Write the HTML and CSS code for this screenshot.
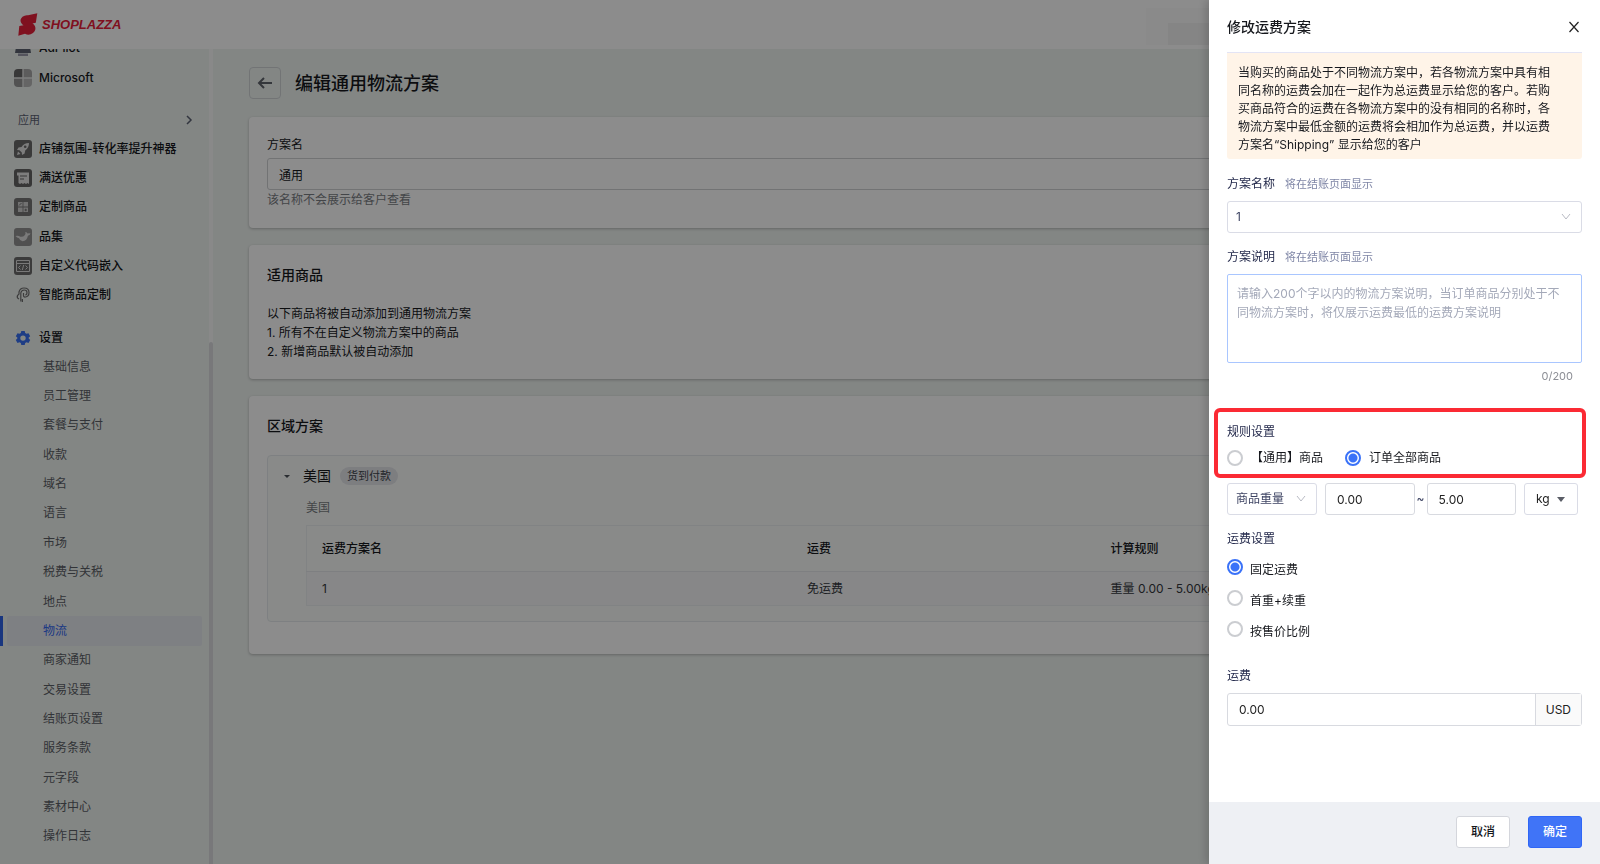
FILE: index.html
```
<!DOCTYPE html>
<html lang="zh-CN">
<head>
<meta charset="utf-8">
<title>编辑通用物流方案</title>
<link rel="stylesheet" href="styles.css">
</head>
<body>
<div class="app">
  <header class="topbar">
    <a class="brand" href="#">
      <svg class="brand-mark" viewBox="0 0 20 24" aria-hidden="true"><path d="M19.300.3 10 2.300Q7 1.800 4.500 3.800 1.500 6.500 3 9.600 4 11.500 5.500 12.300L1.300 13 .3 22.700 7 20.800Q11 23 15 20 18.500 17 17 13.200 16 11.500 14.500 10.600L17.800 9.800Z"/></svg>
      <span class="brand-name">SHOPLAZZA</span>
    </a>
    <div class="account" aria-hidden="true"><span class="account-name"></span></div>
  </header>

  <div class="body">
    <nav class="sidebar" aria-label="主导航">
      <ul class="menu menu-channels">
        <li><a href="#"><svg class="icon" viewBox="0 0 18 18"><path fill="#5b6270" d="M3 2h12l2 12H1z"/><path fill="#99a" d="M4 14.500h10V17H4z"/></svg>AdPilot</a></li>
        <li><a href="#"><svg class="icon" viewBox="0 0 18 18"><path fill="#666" d="M4 0h4.600v8.600H0V4a4 4 0 0 1 4-4z"/><path fill="#a8a8a8" d="M9.400 0H14a4 4 0 0 1 4 4v4.600H9.400z"/><path fill="#959595" d="M0 9.400h8.600V18H4a4 4 0 0 1-4-4z"/><path fill="#b8b8b8" d="M9.400 9.400H18V14a4 4 0 0 1-4 4H9.400z"/><path stroke="#e0e0e0" d="M9 0v18M0 9h18"/></svg>Microsoft</a></li>
      </ul>
      <a class="menu-title" href="#">应用<svg viewBox="0 0 8 10"><path d="M2 1l4 4-4 4"/></svg></a>
      <ul class="menu menu-apps">
        <li><a href="#"><svg class="icon" viewBox="0 0 18 18"><rect width="18" height="18" rx="3" fill="#6b6b6b"/><path fill="#e4e4e4" d="M15 3q-5 0-7.500 4L4.500 7.500 3 10l2.500.3 2.300 2.300.2 2.400 2.600-1.500.6-3Q15 8 15 3z"/><path fill="#e4e4e4" d="M3 15l1-3.500L6.500 14z"/><circle cx="11.200" cy="6.800" r="1.300" fill="#6b6b6b"/></svg>店铺氛围-转化率提升神器</a></li>
        <li><a href="#"><svg class="icon" viewBox="0 0 18 18"><rect width="18" height="18" rx="3" fill="#656565"/><path fill="#e4e4e4" d="M3 3.500h12V15l-1.500-1-1.500 1-1.500-1L9 15l-1.500-1L6 15l-1.500-1V6.500H3z"/><path stroke="#656565" stroke-width="1.200" d="M6 7h7M6 10h4"/></svg>满送优惠</a></li>
        <li><a href="#"><svg class="icon" viewBox="0 0 18 18"><rect width="18" height="18" rx="3" fill="#777"/><path fill="#cfcfcf" d="M4 4h4.600v4.600H4zM9.400 4H14v4.600H9.400zM4 9.400h4.600V14H4zM9.400 9.400H14V14H9.400z"/><path stroke="#777" fill="none" d="M5 7.500l2.500-2.500M10.500 12h2.500M11.700 10.700v2.500"/></svg>定制商品</a></li>
        <li><a href="#"><svg class="icon" viewBox="0 0 18 18"><rect width="18" height="18" rx="3" fill="#929292"/><path fill="#dedede" d="M1.500 8q2.500-.8 5 .8 2.500.4 4.500-1.800 1-1.500.2-3 2 0 2.300 1.600 1.500-.6 3-.2-.6 2-2.600 2.400Q13 13 8.500 13.200 6 13 5 10.200 3 9.800 1.500 8z"/></svg>品集</a></li>
        <li><a href="#"><svg class="icon" viewBox="0 0 18 18"><rect width="18" height="18" rx="3" fill="#6c6c6c"/><path fill="none" stroke="#dcdcdc" d="M2.500 3.500h13v11h-13zM2.500 6.500h13M6.500 8.500l-2 2 2 2M11.500 8.500l2 2-2 2M9.700 8l-1.400 5"/></svg>自定义代码嵌入</a></li>
        <li><a href="#"><svg class="icon" viewBox="0 0 18 18"><path fill="none" stroke="#707070" stroke-width="1.200" d="M5 13Q2.500 12 3.500 9.500L5 8V6q1-4 5-4 5 0 5 4.500 0 4-3.500 4.500-2 .3-2-1.500V7M6.800 15.500V7q.5-3 3.400-3 2.800 0 2.800 2.600Q13 9 11.300 9M8.400 16V13"/></svg>智能商品定制</a></li>
      </ul>
      <a class="menu-settings" href="#"><svg class="icon" viewBox="0 0 18 18"><path fill="#3870f2" fill-rule="evenodd" d="M7.300 2h3.400l.5 2 1.300.8 2-.6 1.700 3-1.500 1.400v1l1.500 1.300-1.700 3-2-.6-1.300.8-.5 2H7.300l-.5-2-1.300-.8-2 .6-1.700-3 1.500-1.400v-1L1.800 7.200l1.700-3 2 .6L6.800 4zM9 6.400a2.700 2.700 0 1 0 0 5.400 2.700 2.700 0 0 0 0-5.400z"/></svg>设置</a>
      <ul class="submenu">
        <li><a href="#">基础信息</a></li>
        <li><a href="#">员工管理</a></li>
        <li><a href="#">套餐与支付</a></li>
        <li><a href="#">收款</a></li>
        <li><a href="#">域名</a></li>
        <li><a href="#">语言</a></li>
        <li><a href="#">市场</a></li>
        <li><a href="#">税费与关税</a></li>
        <li><a href="#">地点</a></li>
        <li class="active"><a href="#" aria-current="page">物流</a></li>
        <li><a href="#">商家通知</a></li>
        <li><a href="#">交易设置</a></li>
        <li><a href="#">结账页设置</a></li>
        <li><a href="#">服务条款</a></li>
        <li><a href="#">元字段</a></li>
        <li><a href="#">素材中心</a></li>
        <li><a href="#">操作日志</a></li>
      </ul>
    </nav>
    <div class="scrollbar" aria-hidden="true"><div class="scrollbar-thumb"></div></div>

    <main class="main">
      <div class="page-head">
        <button class="back" type="button" aria-label="返回"><svg viewBox="0 0 16 14"><path d="M7 2 2 7l5 5M2 7h13"/></svg></button>
        <h1>编辑通用物流方案</h1>
      </div>

      <section class="card">
        <label class="name-label" for="plan">方案名</label>
        <input class="name-input" id="plan" type="text" value="通用">
        <p class="name-hint">该名称不会展示给客户查看</p>
      </section>

      <section class="card">
        <h2>适用商品</h2>
        <p class="rules">以下商品将被自动添加到通用物流方案<br>1. 所有不在自定义物流方案中的商品<br>2. 新增商品默认被自动添加</p>
      </section>

      <section class="card card-zones">
        <h2>区域方案</h2>
        <div class="zone">
          <div class="zone-head">
            <svg viewBox="0 0 8 5"><path d="M1 1h6L4 4z"/></svg>
            <span class="zone-name">美国</span>
            <span class="badge">货到付款</span>
          </div>
          <div class="zone-body">
            <p class="zone-country">美国</p>
            <table class="rates">
              <thead><tr><th class="col-name">运费方案名</th><th class="col-fee">运费</th><th>计算规则</th></tr></thead>
              <tbody><tr><td>1</td><td>免运费</td><td>重量 0.00 - 5.00kg</td></tr></tbody>
            </table>
          </div>
        </div>
      </section>
    </main>
  </div>
</div>

<div class="mask"></div>

<form class="drawer" role="dialog" aria-labelledby="drawer-title">
  <div class="drawer-content">
    <header class="drawer-head">
      <h2 id="drawer-title">修改运费方案</h2>
      <button class="close" type="button" aria-label="关闭"><svg viewBox="0 0 12 12"><path d="M1.500 1l9 10M10.500 1l-9 10"/></svg></button>
    </header>
    <p class="notice">当购买的商品处于不同物流方案中，若各物流方案中具有相同名称的运费会加在一起作为总运费显示给您的客户。若购买商品符合的运费在各物流方案中的没有相同的名称时，各物流方案中最低金额的运费将会相加作为总运费，并以运费方案名“Shipping” 显示给您的客户</p>

    <div class="field">
      <div class="field-head"><label for="rate-name">方案名称</label><small>将在结账页面显示</small></div>
      <div class="select select-wide">
        <select id="rate-name"><option>1</option></select>
        <svg class="chevron" viewBox="0 0 10 8"><path d="M1 1l4 5 4-5"/></svg>
      </div>
    </div>

    <div class="field">
      <div class="field-head"><label for="rate-desc">方案说明</label><small>将在结账页面显示</small></div>
      <textarea id="rate-desc" maxlength="200" placeholder="请输入200个字以内的物流方案说明，当订单商品分别处于不同物流方案时，将仅展示运费最低的运费方案说明"></textarea>
      <output class="counter" for="rate-desc">0/200</output>
    </div>

    <div class="highlight" role="radiogroup" aria-labelledby="scope-title">
      <h3 id="scope-title">规则设置</h3>
      <div class="scope-options">
        <label><input type="radio" name="scope">【通用】商品</label>
        <label><input type="radio" name="scope" checked>订单全部商品</label>
      </div>
    </div>

    <div class="range">
      <div class="select">
        <select aria-label="条件"><option>商品重量</option></select>
        <svg class="chevron" viewBox="0 0 10 8"><path d="M1 1l4 5 4-5"/></svg>
      </div>
      <div class="range-pair">
        <input type="text" value="0.00" aria-label="最小重量">
        <span>~</span>
        <input type="text" value="5.00" aria-label="最大重量">
      </div>
      <div class="select select-unit">
        <select aria-label="单位"><option>kg</option></select>
        <svg class="caret" viewBox="0 0 8 5"><path d="M0 0h8L4 5z"/></svg>
      </div>
    </div>

    <div class="fee-type" role="radiogroup" aria-labelledby="fee-title">
      <h3 id="fee-title">运费设置</h3>
      <label><input type="radio" name="fee" checked><span>固定运费</span></label>
      <label><input type="radio" name="fee"><span>首重+续重</span></label>
      <label><input type="radio" name="fee"><span>按售价比例</span></label>
    </div>

    <div class="fee">
      <label for="fee">运费</label>
      <div class="money"><input id="fee" type="text" value="0.00"><span>USD</span></div>
    </div>
  </div>
  <footer class="drawer-foot">
    <button class="btn" type="button">取消</button>
    <button class="btn btn-primary" type="submit">确定</button>
  </footer>
</form>
</body>
</html>
```

FILE: styles.css
```
* { box-sizing: border-box; }

body {
  margin: 0;
  font: 12px/20px Inter, "Noto Sans CJK SC", sans-serif;
  color: #16181d;
}

h1, h2, h3, p, ul { margin: 0; padding: 0; }
ul { list-style: none; }
a { color: inherit; text-decoration: none; }
button, input, select, textarea { font: inherit; color: inherit; margin: 0; }
svg { display: block; flex: none; }

/* Shell */
.app {
  height: 100vh;
  min-height: 760px;
  display: flex;
  flex-direction: column;
  overflow: hidden;
  background: #eff4f1;
}

.topbar {
  height: 49px;
  flex: none;
  display: flex;
  align-items: flex-start;
  justify-content: space-between;
  padding-left: 18px;
  background: #fff;
  position: relative;
}

.brand { display: flex; align-items: center; gap: 4px; height: 49px; color: #e8203a; }
.brand-mark { width: 20px; height: 24px; fill: #e8203a; }
.brand-name { font: italic 700 13px/24px "Liberation Sans Narrow", "Liberation Sans", sans-serif; }

.account { width: 454px; height: 37px; margin-top: 8px; padding: 15px 0 0 22px; background: #fbfbfb; }
.account-name { display: block; height: 22px; background: #f3f3f3; }

.body { flex: 1; display: flex; min-height: 0; }

/* Sidebar */
.sidebar {
  width: 209px;
  flex: none;
  display: flex;
  flex-direction: column;
  padding-bottom: 13px;
  overflow: hidden;
}

.sidebar a { display: flex; align-items: center; }
.icon { width: 18px; height: 18px; margin-right: 7px; }

.menu { display: grid; grid-auto-rows: 1fr; flex: none; padding-left: 14px; font-weight: 500; }
.menu a { height: 100%; }
.menu-channels { height: 60px; margin-top: -16px; }
.menu-apps { height: 176px; }

.sidebar .menu-title {
  flex: none;
  height: 28px;
  margin-top: 13px;
  padding: 0 16px 0 18px;
  justify-content: space-between;
  font-size: 11px;
  color: #5c6273;
}
.menu-title svg { width: 8px; height: 10px; fill: none; stroke: #5c6273; stroke-width: 1.5; }

.sidebar .menu-settings { flex: none; height: 29px; margin-top: 13px; padding-left: 14px; font-weight: 500; }

.submenu { flex: 1; display: flex; flex-direction: column; color: #5c5f66; }
.submenu li { flex: 1; display: flex; padding: 0 7px; border-left: 0 solid #2f63e8; }
.submenu a { flex: 1; padding-left: 36px; border-radius: 2px; }
.submenu .active { padding-left: 4px; border-left-width: 3px; color: #3468f0; }
.submenu .active a { background: #e6e9ef; }

.scrollbar { width: 4px; flex: none; background: #fafafa; display: flex; align-items: flex-end; }
.scrollbar-thumb { width: 4px; height: 64%; border-radius: 2px 2px 0 0; background: #dadbde; }

/* Page */
.main { flex: 1; min-width: 0; padding: 18px 36px; }

.page-head { display: flex; align-items: center; gap: 14px; margin-bottom: 18px; }
.page-head h1 { padding-top: 2px; font-size: 18px; line-height: 24px; font-weight: 500; }
.back {
  width: 32px;
  height: 32px;
  display: grid;
  place-items: center;
  padding: 0;
  border: 1px solid #d0d3d6;
  border-radius: 4px;
  background: transparent;
}
.back svg { width: 16px; height: 14px; fill: none; stroke: #60646c; stroke-width: 2; }

.card {
  margin-bottom: 17px;
  padding: 18px;
  border-radius: 4px;
  background: #fff;
  box-shadow: 0 1px 3px rgba(0, 0, 0, .25);
}
.card h2 { font-size: 14px; line-height: 24px; font-weight: 500; }

.name-label { display: block; line-height: 20px; margin-bottom: 3px; }
.name-input { display: block; width: 100%; height: 32px; padding: 0 11px; border: 1px solid #cfd1d4; border-radius: 3px; background: transparent; }
.name-hint { line-height: 20px; color: #7b7e84; }

.rules { margin-top: 17px; line-height: 19px; }

.card-zones { padding-bottom: 32px; }
.zone { margin-top: 17px; padding: 10px 24px 15px 15px; border: 1px solid #e6eaed; border-radius: 4px; background: #f9fcfa; }
.zone-head { display: flex; align-items: center; height: 20px; }
.zone-head svg { width: 8px; height: 5px; margin-right: 12px; fill: #4e525a; }
.zone-name { font-size: 14px; margin-right: 9px; }
.badge { padding: 0 7px; border-radius: 9px; font-size: 11px; line-height: 18px; background: #e4e5ea; color: #40444c; }
.zone-body { padding-left: 23px; }
.zone-country { margin: 12px 0 7px; line-height: 20px; color: #7b7e84; }

.rates { width: 100%; border-collapse: collapse; table-layout: fixed; border: 1px solid #eceef1; }
.rates th, .rates td { padding: 0 15px; text-align: left; }
.rates th { height: 46px; font-weight: 500; }
.rates td { height: 34px; border-top: 1px solid #e6e8eb; background: #f6f6f7; color: #33363c; }
.rates .col-name { width: 40%; }
.rates .col-fee { width: 25%; }

.mask { position: fixed; inset: 0; background: rgba(0, 0, 0, .45); }

/* Drawer */
.drawer {
  position: fixed;
  top: 0;
  right: 0;
  bottom: 0;
  width: 391px;
  display: flex;
  flex-direction: column;
  background: #fff;
  box-shadow: -4px 0 8px rgba(0, 0, 0, .15);
}

.drawer-content { flex: 1; padding: 0 18px; overflow: hidden; }
.drawer-head { display: flex; align-items: center; justify-content: space-between; height: 53px; padding-top: 2px; border-bottom: 1px solid #e3e4f5; }
.drawer-head h2 { font-size: 14px; line-height: 20px; font-weight: 500; }
.close { padding: 2px; border: 0; background: none; }
.close svg { width: 12px; height: 12px; fill: none; stroke: #222; stroke-width: 1.2; }

.notice { padding: 11px 30px 5px 11px; border-radius: 0 0 3px 3px; background: #fff4e8; line-height: 18px; }

.field { margin-top: 14px; }
.notice + .field { margin-top: 15px; }
.field-head { display: flex; align-items: center; gap: 10px; height: 20px; margin-bottom: 7px; color: #242a4c; }
.field-head small { font-size: 11px; color: #7f86a6; }

.select { position: relative; width: 90px; }
.select-wide { width: 100%; }
.select-unit { width: 54px; }
.select select {
  appearance: none;
  display: block;
  width: 100%;
  height: 32px;
  padding: 0 8px;
  border: 1px solid #dadce6;
  border-radius: 3px;
  background: #fff;
  color: #3e4463;
}
.select-unit select { padding: 0 11px; color: #222; }
.chevron, .caret { position: absolute; right: 11px; top: 12px; pointer-events: none; }
.chevron { width: 10px; height: 8px; fill: none; stroke: #b9bbc4; }
.caret { width: 8px; height: 5px; top: 14px; right: 13px; fill: #5a5d66; }

.field textarea {
  display: block;
  width: 100%;
  height: 89px;
  padding: 9px 16px 9px 9px;
  border: 1px solid #a9c6ff;
  border-radius: 2px;
  line-height: 19px;
  resize: none;
}
.field textarea::placeholder { color: #a4a9b9; opacity: 1; }
.counter { display: block; margin-top: 3px; padding-right: 9px; text-align: right; font-size: 11px; line-height: 20px; color: #8c8e95; }

.drawer h3 { font-size: 12px; line-height: 20px; font-weight: 400; color: #242a4c; }

.highlight { margin: 22px -4px 5px -13px; padding: 10px 9px; border: 4px solid #fb2a34; border-radius: 6px; height: 70px; }
.scope-options { display: flex; gap: 22px; margin-top: 6px; }
.scope-options label { display: flex; align-items: center; gap: 8px; height: 20px; }

input[type="radio"] {
  appearance: none;
  width: 16px;
  height: 16px;
  flex: none;
  border: 2px solid #cbcdd1;
  border-radius: 50%;
  background: #fff;
}
input[type="radio"]:checked {
  border-color: #3a72f8;
  background: radial-gradient(circle, #3a72f8 0 4px, #fff 5px);
}

.range { display: flex; gap: 8px; padding-right: 4px; }
.range-pair { flex: 1; display: flex; align-items: center; color: #3e4463; }
.range-pair span { width: 12px; text-align: center; }
.range-pair input { flex: 1; min-width: 0; width: 0; height: 32px; padding: 0 11px; border: 1px solid #d8dae0; border-radius: 3px; color: #222; }

.fee-type { margin-top: 14px; }
.fee-type label { display: flex; gap: 7px; height: 31px; }
.fee-type h3 { margin-bottom: 10px; }
.fee-type label span { padding-top: 1px; }

.fee { margin-top: 14px; color: #242a4c; }
.fee label { display: block; margin-bottom: 7px; }
.money { display: flex; height: 33px; border: 1px solid #d8dae0; border-radius: 3px; color: #222; }
.money input { flex: 1; min-width: 0; padding: 0 11px; border: 0; background: none; }
.money span { padding: 0 10px; border-left: 1px solid #d8dae0; background: #fafafa; line-height: 31px; }

.drawer-foot { display: flex; justify-content: flex-end; gap: 18px; padding: 14px 18px 16px; background: #eef0f4; }
.btn { height: 32px; padding: 0 14px; border: 1px solid #d4d6dc; border-radius: 3px; background: #fff; font-weight: 500; }
.btn-primary { border-color: #2f66f6; background: #4074f7; color: #fff; }
```
